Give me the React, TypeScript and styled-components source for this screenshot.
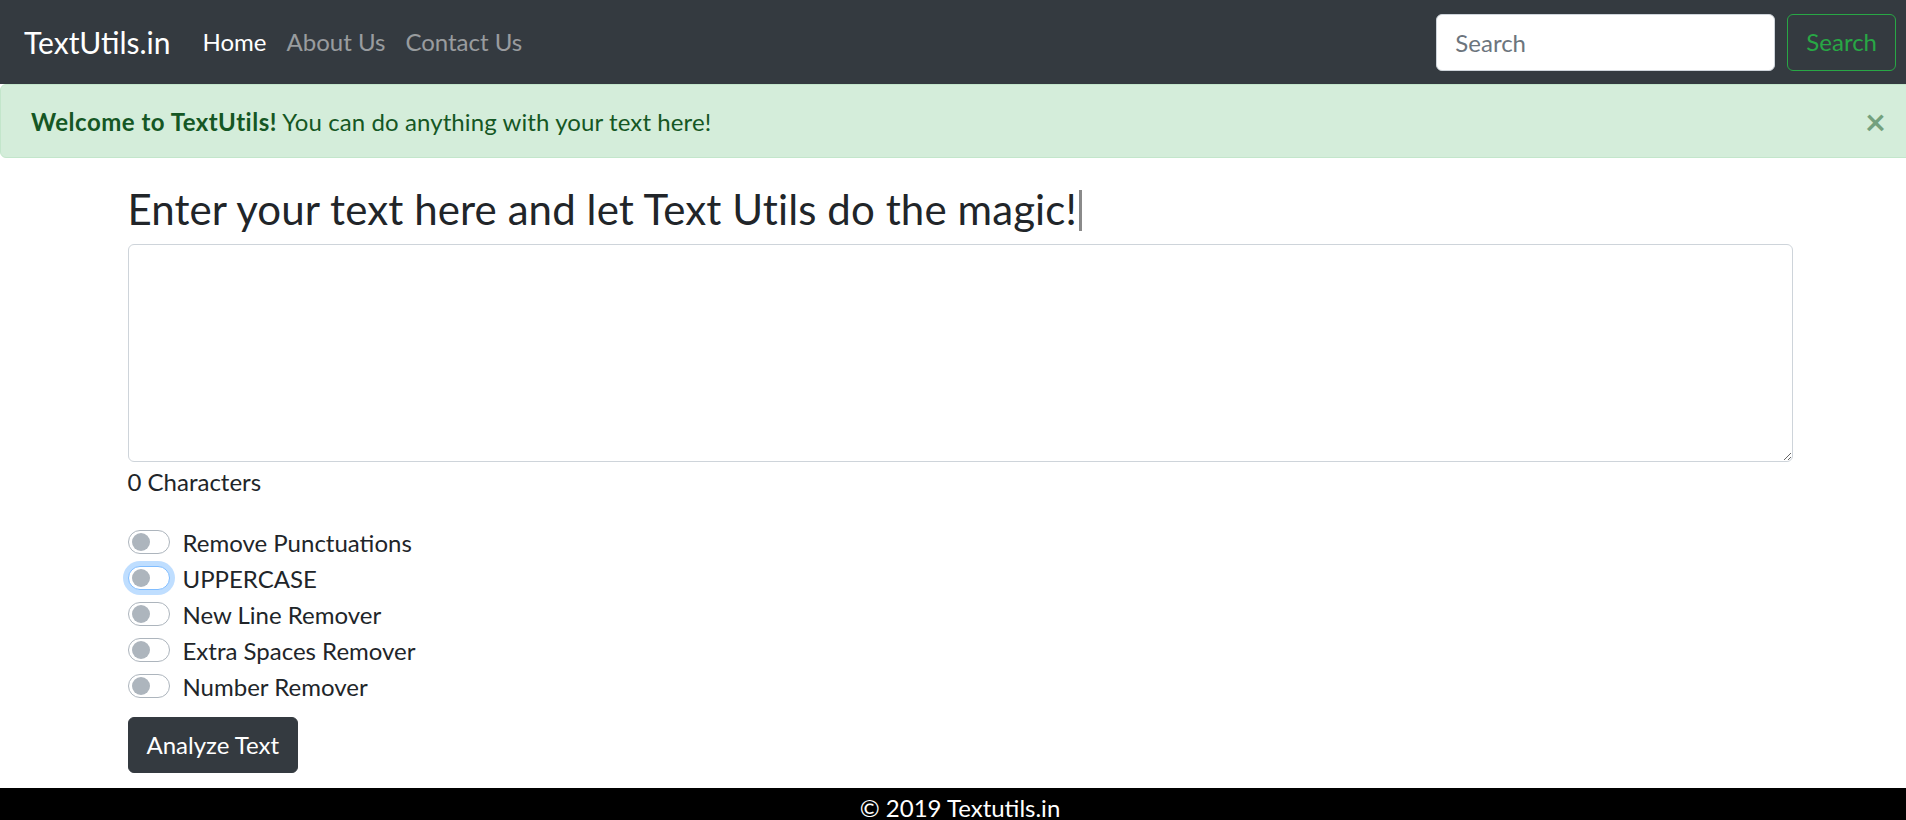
import React, { useState } from "react";
import styled, { createGlobalStyle } from "styled-components";

const GlobalStyle = createGlobalStyle`
    html, body {
        margin: 0;
        padding: 0;
        overflow: hidden;
        background: #fff;
    }
    body {
        font-family: Lato, "Open Sans", sans-serif;
        color: #212529;
    }
    * {
        box-sizing: border-box;
    }
`;

const Page = styled.div`
    width: 1920px;
`;

const Navbar = styled.nav`
    display: flex;
    align-items: center;
    height: 84px;
    padding: 12px 24px;
    background-color: #343a40;
`;

const Brand = styled.a`
    font-size: 30px;
    line-height: 45px;
    color: #fff;
    margin-right: 22px;
    text-decoration: none;
`;

const NavList = styled.ul`
    display: flex;
    list-style: none;
    margin: 0;
    padding: 0;
`;

const NavLink = styled.a<{ $active?: boolean }>`
    display: block;
    padding: 6px 10px;
    font-size: 24px;
    line-height: 36px;
    color: ${(p) => (p.$active ? "#fff" : "rgba(255, 255, 255, 0.5)")};
    text-decoration: none;
`;

const SearchForm = styled.form`
    display: flex;
    align-items: center;
    gap: 12px;
    margin-left: auto;
`;

const SearchInput = styled.input`
    width: 339px;
    height: 57px;
    padding: 9px 18px;
    font-family: inherit;
    font-size: 24px;
    color: #495057;
    border: 1px solid #ced4da;
    border-radius: 6px;
    outline: none;

    &::placeholder {
        color: #6c757d;
    }
`;

const OutlineButton = styled.button`
    height: 57px;
    padding: 9px 18px;
    font-family: inherit;
    font-size: 24px;
    line-height: 36px;
    color: #28a745;
    background: transparent;
    border: 1px solid #28a745;
    border-radius: 6px;
`;

const Alert = styled.div`
    display: flex;
    align-items: center;
    height: 74px;
    padding: 0 25px 0 30px;
    margin-bottom: 26px;
    font-size: 24px;
    color: #155724;
    background-color: #d4edda;
    border: 1px solid #c3e6cb;
    border-radius: 6px;

    strong {
        font-weight: 700;
        letter-spacing: 0.5px;
    }
`;

const AlertText = styled.div`
    flex: 1;
    letter-spacing: 0.1px;
`;

const CloseButton = styled.button`
    padding: 0 8px;
    font-family: inherit;
    font-size: 36px;
    font-weight: 700;
    line-height: 1;
    color: #155724;
    opacity: 0.5;
    background: transparent;
    border: 0;
`;

const Container = styled.main`
    width: 1665px;
    margin: 0 auto;
`;

const Heading = styled.h1`
    margin: 0 0 10px;
    font-size: 42px;
    font-weight: 400;
    line-height: 50px;
    letter-spacing: 0.1px;
`;

const Caret = styled.span`
    display: inline-block;
    width: 3px;
    height: 41px;
    margin-left: 2px;
    vertical-align: -6px;
    background-color: #8a8a8a;
`;

const TextBox = styled.textarea`
    display: block;
    width: 100%;
    height: 218px;
    padding: 9px 18px;
    font-family: inherit;
    font-size: 24px;
    border: 1px solid #ced4da;
    border-radius: 6px;
    outline: none;
    resize: vertical;
`;

const Summary = styled.p`
    margin: 2px 0 24px;
    font-size: 24px;
    line-height: 36px;
`;

const SwitchList = styled.div`
    display: flex;
    flex-direction: column;
`;

const SwitchRow = styled.label`
    display: flex;
    align-items: center;
    gap: 13px;
    height: 36px;
    font-size: 24px;
`;

const Track = styled.span<{ $focused?: boolean }>`
    display: flex;
    align-items: center;
    width: 42px;
    height: 24px;
    padding: 0 3px;
    border: 1px solid ${(p) => (p.$focused ? "#80bdff" : "#adb5bd")};
    border-radius: 12px;
    background: #fff;
    box-shadow: ${(p) => (p.$focused ? "0 0 0 5px rgba(0, 123, 255, 0.25)" : "none")};
`;

const Knob = styled.span`
    width: 18px;
    height: 18px;
    border-radius: 50%;
    background-color: #adb5bd;
`;

const DarkButton = styled.button`
    margin-top: 13px;
    padding: 9px 18px;
    font-family: inherit;
    font-size: 24px;
    line-height: 36px;
    color: #fff;
    background-color: #343a40;
    border: 1px solid #343a40;
    border-radius: 6px;
`;

const Footer = styled.footer`
    margin-top: 15px;
    padding: 2px 0 20px;
    font-size: 24px;
    line-height: 36px;
    text-align: center;
    color: #fff;
    background-color: #000;
`;

const options = [
    "Remove Punctuations",
    "UPPERCASE",
    "New Line Remover",
    "Extra Spaces Remover",
    "Number Remover",
];

export default function App() {
    const [text, setText] = useState("");

    return (
        <Page>
            <GlobalStyle />
            <Navbar>
                <Brand href="#">TextUtils.in</Brand>
                <NavList>
                    <li><NavLink href="#" $active>Home</NavLink></li>
                    <li><NavLink href="#">About Us</NavLink></li>
                    <li><NavLink href="#">Contact Us</NavLink></li>
                </NavList>
                <SearchForm onSubmit={(e) => e.preventDefault()}>
                    <SearchInput type="search" placeholder="Search" />
                    <OutlineButton type="submit">Search</OutlineButton>
                </SearchForm>
            </Navbar>

            <Alert>
                <AlertText>
                    <strong>Welcome to TextUtils!</strong> You can do anything with your text here!
                </AlertText>
                <CloseButton type="button">&times;</CloseButton>
            </Alert>

            <Container>
                <Heading>
                    Enter your text here and let Text Utils do the magic!<Caret />
                </Heading>
                <TextBox value={text} onChange={(e) => setText(e.target.value)} />
                <Summary>{text.length} Characters</Summary>

                <SwitchList>
                    {options.map((label, i) => (
                        <SwitchRow key={label}>
                            <Track $focused={i === 1}>
                                <Knob />
                            </Track>
                            {label}
                        </SwitchRow>
                    ))}
                </SwitchList>

                <DarkButton type="button">Analyze Text</DarkButton>
            </Container>

            <Footer>&copy; 2019 Textutils.in</Footer>
        </Page>
    );
}
